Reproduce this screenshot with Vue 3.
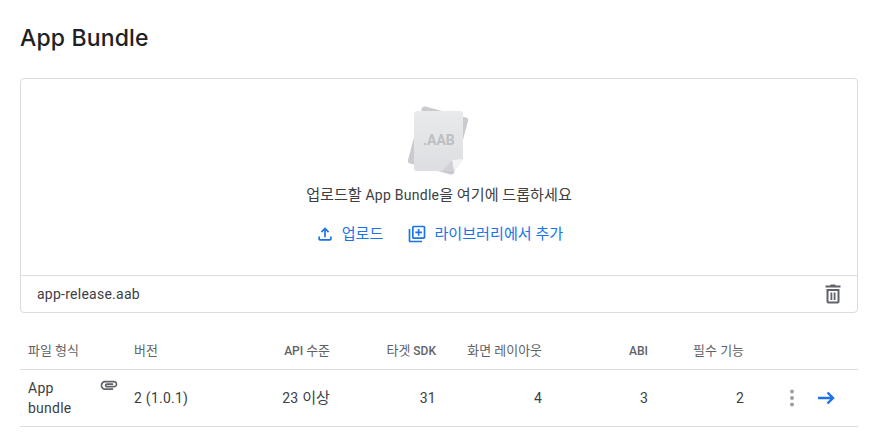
<template>
  <div class="page">
    <h1 class="title">App Bundle</h1>

    <div class="drop-card">
      <div class="drop-area">
        <div class="aab-art">
          <svg width="64" height="72" viewBox="0 0 64 72">
            <defs>
              <linearGradient id="sheet" x1="0" y1="0" x2="0" y2="1">
                <stop offset="0" stop-color="#e9eaec" />
                <stop offset="1" stop-color="#dddee1" />
              </linearGradient>
            </defs>
            <rect x="7" y="6" width="48" height="59" rx="3" fill="#c9cbce" transform="rotate(15 31 35.5)" />
            <path d="M10 6h43a3 3 0 0 1 3 3v45L47 66H10a3 3 0 0 1-3-3V9a3 3 0 0 1 3-3z" fill="url(#sheet)" />
            <path d="M56 54 47 66 45 55z" fill="#f3f3f4" />
            <path d="M45 55 47 66H35z" fill="#d0d2d5" />
          </svg>
          <span class="aab-label">.AAB</span>
        </div>
        <p class="drop-text"><span class="ko">업로드할</span> App Bundle<span class="ko">을 여기에 드롭하세요</span></p>
        <div class="drop-actions">
          <button class="link-btn">
            <svg width="20" height="20" viewBox="0 0 24 24" fill="currentColor">
              <path d="M18 15v3H6v-3H4v3c0 1.1.9 2 2 2h12c1.1 0 2-.9 2-2v-3h-2zM7 9l1.41 1.41L11 7.83V16h2V7.83l2.59 2.58L17 9l-5-5-5 5z" />
            </svg>
            <span class="ko">업로드</span>
          </button>
          <button class="link-btn">
            <svg width="20" height="20" viewBox="0 0 24 24" fill="currentColor">
              <path d="M4 6H2v14c0 1.1.9 2 2 2h14v-2H4V6zm16-4H8c-1.1 0-2 .9-2 2v12c0 1.1.9 2 2 2h12c1.1 0 2-.9 2-2V4c0-1.1-.9-2-2-2zm0 14H8V4h12v12zm-7-2h2v-3h3V9h-3V6h-2v3h-3v2h3z" />
            </svg>
            <span class="ko">라이브러리에서 추가</span>
          </button>
        </div>
      </div>
      <div class="file-row">
        <span>app-release.aab</span>
        <svg class="trash" width="24" height="24" viewBox="0 0 24 24" fill="currentColor">
          <path d="M15 3.5 14 2.5h-4l-1 1H4.5v2h15v-2zM5.5 7v12.5c0 1.1.9 2 2 2h9c1.1 0 2-.9 2-2V7zm2 2h9v10.5h-9zM9.5 10.5v7.5h1.8v-7.5zm3.2 0v7.5h1.8v-7.5z" />
        </svg>
      </div>
    </div>

    <div class="table">
      <div class="row head">
        <div class="cell ko">파일 형식</div>
        <div class="cell ko">버전</div>
        <div class="cell num">API <span class="ko">수준</span></div>
        <div class="cell num"><span class="ko">타겟</span> SDK</div>
        <div class="cell num ko">화면 레이아웃</div>
        <div class="cell num">ABI</div>
        <div class="cell num ko">필수 기능</div>
        <div class="cell"></div>
      </div>
      <div class="row body">
        <div class="cell type-cell">
          <span class="type-name">App bundle</span>
          <svg class="clip" width="20" height="20" viewBox="0 0 24 24" fill="currentColor">
            <path d="M2 12.5C2 9.46 4.46 7 7.5 7H18c2.21 0 4 1.79 4 4s-1.79 4-4 4H9.5C8.12 15 7 13.88 7 12.5S8.12 10 9.5 10H17v2H9.41c-.55 0-.55 1 0 1H18c1.1 0 2-.9 2-2s-.9-2-2-2H7.5C5.57 9 4 10.57 4 12.5S5.57 16 7.5 16H17v2H7.5C4.46 18 2 15.54 2 12.5z" />
          </svg>
        </div>
        <div class="cell">2 (1.0.1)</div>
        <div class="cell num">23 <span class="ko">이상</span></div>
        <div class="cell num">31</div>
        <div class="cell num">4</div>
        <div class="cell num">3</div>
        <div class="cell num">2</div>
        <div class="cell actions">
          <svg class="more" width="24" height="24" viewBox="0 0 24 24" fill="currentColor">
            <circle cx="12" cy="5.5" r="2" />
            <circle cx="12" cy="12" r="2" />
            <circle cx="12" cy="18.5" r="2" />
          </svg>
          <svg class="arrow" width="24" height="24" viewBox="0 0 24 24" fill="none" stroke="currentColor" stroke-width="2.4">
            <path d="M5 12H20M14.5 6.5 20 12l-5.5 5.5" />
          </svg>
        </div>
      </div>
    </div>
  </div>
</template>

<script setup>
</script>

<style scoped>
.page {
  width: 838px;
  padding: 0 22px 0 20px;
  font-family: Roboto, "Noto Sans CJK KR", sans-serif;
  font-size: 14px;
  letter-spacing: 0.25px;
  color: #3c4043;
}
.ko {
  font-size: 1.08em;
  font-weight: 400;
  letter-spacing: 0;
}
.title {
  margin: 0;
  padding-top: 23px;
  height: 78px;
  box-sizing: border-box;
  font-family: Inter, "Noto Sans CJK KR", sans-serif;
  font-size: 23px;
  font-weight: 500;
  letter-spacing: 0.15px;
  line-height: 30px;
  color: #202124;
}
.drop-card {
  height: 235px;
  box-sizing: border-box;
  border: 1px solid #dadce0;
  border-radius: 4px;
  display: flex;
  flex-direction: column;
}
.drop-area {
  flex: 1;
  display: flex;
  flex-direction: column;
  align-items: center;
  padding-top: 26px;
}
.aab-art {
  position: relative;
  width: 64px;
  height: 72px;
}
.aab-label {
  position: absolute;
  left: 16px;
  top: 27px;
  font-size: 14px;
  font-weight: 700;
  letter-spacing: 0;
  color: #bdbfc3;
}
.drop-text {
  margin: 8px 0 0;
  line-height: 20px;
}
.drop-actions {
  display: flex;
  gap: 24px;
  margin-top: 19px;
}
.link-btn {
  display: flex;
  align-items: center;
  gap: 7px;
  padding: 0;
  border: none;
  background: none;
  font: inherit;
  letter-spacing: inherit;
  line-height: 20px;
  color: #1a73e8;
}
.file-row {
  height: 36px;
  padding: 0 12px 0 16px;
  border-top: 1px solid #dadce0;
  display: flex;
  align-items: center;
  justify-content: space-between;
  color: #3c4043;
}
.trash {
  color: #5f6368;
}
.table {
  margin-top: 20px;
}
.row {
  display: grid;
  grid-template-columns: 106px 106px 106px 106px 106px 106px 96px 106px;
  align-items: center;
  border-bottom: 1px solid #dadce0;
}
.head {
  height: 36px;
  font-size: 12px;
  font-weight: 500;
  letter-spacing: 0;
  color: #5f6368;
}
.body {
  height: 56px;
}
.cell {
  padding: 0 8px;
  line-height: 24px;
}
.num {
  text-align: right;
}
.type-cell {
  display: flex;
  align-items: flex-start;
  justify-content: space-between;
  padding-right: 0;
}
.type-name {
  width: 50px;
  line-height: 20px;
}
.clip {
  color: #5f6368;
  margin-right: 7px;
  margin-top: -3px;
}
.actions {
  display: flex;
  align-items: center;
  justify-content: flex-end;
  gap: 9px;
  padding-right: 21px;
}
.more {
  color: #9aa0a6;
}
.arrow {
  color: #1a73e8;
}
</style>
